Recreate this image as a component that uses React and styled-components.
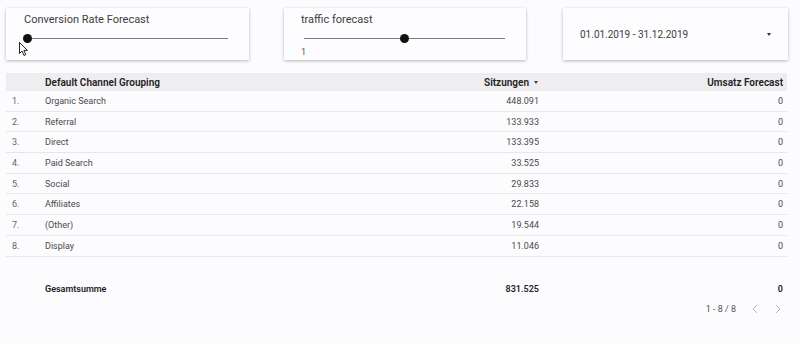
import React from "react";
import styled, { createGlobalStyle } from "styled-components";

const rows = [
  ["Organic Search", "448.091", "0"],
  ["Referral", "133.933", "0"],
  ["Direct", "133.395", "0"],
  ["Paid Search", "33.525", "0"],
  ["Social", "29.833", "0"],
  ["Affiliates", "22.158", "0"],
  ["(Other)", "19.544", "0"],
  ["Display", "11.046", "0"],
];

const GlobalStyle = createGlobalStyle`
  body {
    margin: 0;
    background: #fcfbfd;
    font-family: Roboto, "Liberation Sans", sans-serif;
    color: #333;
  }
`;

const Page = styled.div`
  position: relative;
  width: 800px;
  height: 344px;
  overflow: hidden;
  background: #fcfbfd;
`;

const Controls = styled.div`
  display: flex;
  padding: 8px 0 0 6px;
  gap: 35px;
`;

const Card = styled.div`
  width: ${({ w }) => w}px;
  height: 52px;
  margin-left: ${({ ml }) => ml || 0}px;
  background: #fdfcfe;
  box-shadow: 0 1px 3px rgba(0, 0, 0, 0.28);
  box-sizing: border-box;
  padding: ${({ pad }) => pad};
`;

const CardTitle = styled.div`
  font-size: 11px;
  color: #3c3c3c;
  line-height: 13px;
`;

const SliderWrap = styled.div`
  position: relative;
  height: 9px;
  margin: 8px ${({ mr }) => mr}px 0 ${({ ml }) => ml}px;
`;

const Track = styled.div`
  position: absolute;
  left: 0;
  right: 0;
  top: 4px;
  height: 1px;
  background: #7a7a7a;
`;

const Thumb = styled.div`
  position: absolute;
  top: 0;
  width: 9px;
  height: 9px;
  margin-left: -4.5px;
  border-radius: 50%;
  background: #111;
`;

const SliderLabel = styled.div`
  font-size: 9px;
  color: #555;
  margin-top: 4px;
  line-height: 10px;
`;

const DateBox = styled.div`
  display: flex;
  align-items: center;
  justify-content: space-between;
  height: 100%;
  font-size: 10px;
  color: #3c3c3c;
`;

const Caret = styled.span`
  width: 0;
  height: 0;
  border-left: 2.5px solid transparent;
  border-right: 2.5px solid transparent;
  border-top: 3px solid #333;
`;

const Table = styled.div`
  margin: 13px 13px 0 6px;
`;

const Row = styled.div`
  display: grid;
  grid-template-columns: 39px 355px 143px 1fr;
  align-items: ${({ end }) => (end ? "end" : "center")};
  height: ${({ h }) => h}px;
  padding-bottom: ${({ end }) => (end ? 5 : 0)}px;
  box-sizing: border-box;
  background: ${({ head }) => (head ? "#efedf0" : "transparent")};
  border-bottom: ${({ line }) => (line ? "1px solid #e8e6e9" : "none")};
  font-size: ${({ head }) => (head ? 10 : 9)}px;
  color: ${({ head, bold }) => (head || bold ? "#222" : "#4a4a4a")};
  font-weight: ${({ head, bold }) => (head || bold ? 600 : 400)};
`;

const Idx = styled.div`
  padding-left: 6px;
  color: #666;
`;

const Num = styled.div`
  text-align: right;
  padding-right: 4px;
  display: flex;
  justify-content: flex-end;
  align-items: center;
  gap: 5px;
`;

const SmallCaret = styled(Caret)`
  border-top-color: #444;
  margin-right: 1px;
`;

const Pager = styled.div`
  display: flex;
  justify-content: flex-end;
  align-items: center;
  gap: 16px;
  margin-right: 6px;
  height: 20px;
  font-size: 9px;
  color: #555;
`;

const Chevrons = styled.div`
  display: flex;
  gap: 17px;
`;

const Cursor = styled.svg`
  position: absolute;
  left: 19px;
  top: 42px;
`;

const Chevron = ({ dir }) => (
  <svg width="6" height="10" viewBox="0 0 6 10">
    <path
      d={dir === "left" ? "M5 1 L1 5 L5 9" : "M1 1 L5 5 L1 9"}
      fill="none"
      stroke="#b5b5b5"
      strokeWidth="1"
    />
  </svg>
);

export default function App() {
  return (
    <Page>
      <GlobalStyle />
      <Controls>
        <Card w={243} pad="5px 0 0 18px">
          <CardTitle>Conversion Rate Forecast</CardTitle>
          <SliderWrap ml={3} mr={21}>
            <Track />
            <Thumb style={{ left: "0%" }} />
          </SliderWrap>
        </Card>
        <Card w={242} pad="5px 0 0 17px">
          <CardTitle>traffic forecast</CardTitle>
          <SliderWrap ml={3} mr={21}>
            <Track />
            <Thumb style={{ left: "50%" }} />
          </SliderWrap>
          <SliderLabel>1</SliderLabel>
        </Card>
        <Card w={225} ml={2} pad="0 17px 0 17px">
          <DateBox>
            01.01.2019 - 31.12.2019
            <Caret />
          </DateBox>
        </Card>
      </Controls>

      <Table>
        <Row head h={18}>
          <Idx />
          <div>Default Channel Grouping</div>
          <Num>
            Sitzungen <SmallCaret />
          </Num>
          <Num>Umsatz Forecast</Num>
        </Row>
        {rows.map((r, i) => (
          <Row key={i} h={20.7} line>
            <Idx>{i + 1}.</Idx>
            <div>{r[0]}</div>
            <Num>{r[1]}</Num>
            <Num>{r[2]}</Num>
          </Row>
        ))}
        <Row bold end h={42}>
          <Idx />
          <div>Gesamtsumme</div>
          <Num>831.525</Num>
          <Num>0</Num>
        </Row>
        <Pager>
          <span>1 - 8 / 8</span>
          <Chevrons>
            <Chevron dir="left" />
            <Chevron dir="right" />
          </Chevrons>
        </Pager>
      </Table>

      <Cursor width="10" height="15" viewBox="0 0 10 15">
        <path
          d="M0.5 0.5 L0.5 11.5 L3 9 L5 13.5 L6.8 12.7 L4.9 8.4 L8.5 8.4 Z"
          fill="#fff"
          stroke="#222"
          strokeWidth="1"
          strokeLinejoin="round"
        />
      </Cursor>
    </Page>
  );
}
